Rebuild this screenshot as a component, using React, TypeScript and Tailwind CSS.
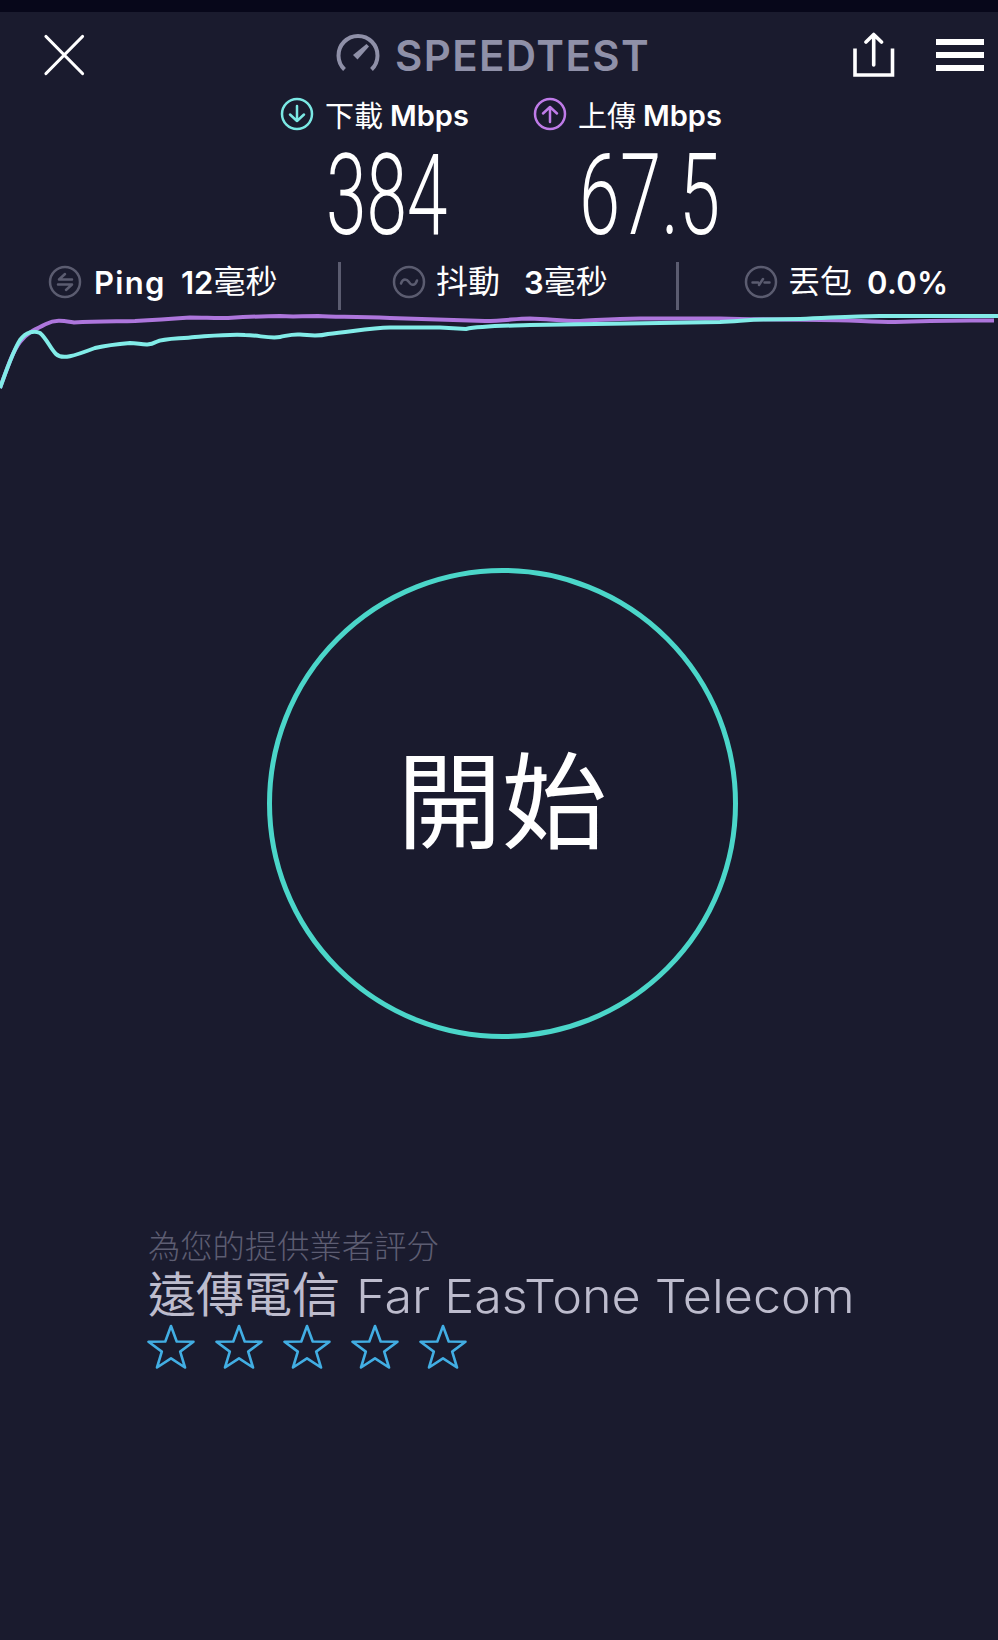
import type { ReactNode } from 'react';

const DOWNLOAD_PATH =
  'M0 88 C8 66 13 51 20 40 C26 32 34 30 40 33 C47 39 50 48 56 54 C62 60 74 56 95 48 C108 45 118 44 130 43 C140 43 147 47 156 42 C165 38 180 39 195 37 C210 36 230 34 245 35 C258 35 270 39 280 37 C290 35 292 34 300 34.500 C310 35 316 37 328 34 C350 32 370 28 390 27.500 L440 27.500 L466 29 C480 26 500 26 530 25 L660 23 L720 22 C740 21 750 19.500 765 19.500 L800 19 C830 18 850 16 880 16 L998 16';

const UPLOAD_PATH =
  'M0 88 C8 66 13 51 20 42 C28 32 36 29 46 24 C56 19 64 21 74 22.500 C95 21.500 110 21.500 135 21 C155 20 170 19 190 17.500 C205 17.500 215 18.500 228 18 C245 17 265 16 280 16 C295 17 300 16 318 16 C335 17 350 16.500 390 18 C430 19 460 20 485 21 C505 21 515 18.500 530 18.500 C550 19 560 21 580 21 C600 20 615 18.500 640 18.500 L720 18.500 C760 20 790 19 820 20 C850 20 870 22 895 22 C915 21 935 20 994 20.500';

const cjk = "font-['Noto_Sans_CJK_TC','Noto_Sans_CJK_SC',sans-serif]";

function RoundIcon({ className, children }: { className: string; children: ReactNode }) {
  return (
    <svg
      viewBox="0 0 34 34"
      className={`h-[34px] w-[34px] shrink-0 ${className}`}
      fill="none"
      stroke="currentColor"
      strokeWidth="2.5"
      strokeLinecap="round"
      strokeLinejoin="round"
    >
      <circle cx="17" cy="17" r="15" />
      {children}
    </svg>
  );
}

function Star() {
  return (
    <svg viewBox="0 0 48 46" className="h-[46px] w-12" fill="none" stroke="#42aee3" strokeWidth="2.6" strokeLinejoin="round">
      <path d="M24 2 L29.700 17.500 L46.500 17.800 L33.200 27.600 L38 43.500 L24 34.300 L10 43.500 L14.800 27.600 L1.500 17.800 L18.300 17.500 Z" />
    </svg>
  );
}

export default function App() {
  return (
    <div className="h-[1640px] w-[998px] overflow-hidden bg-[#1a1b2e] font-[Inter,'Noto_Sans_CJK_TC',sans-serif] text-white">
      <div className="h-3 bg-[#07071a]" />

      {/* Header */}
      <header className="flex h-[84px] items-center pt-0.5">
        <button className="ml-[43px] h-[42px] w-[42px]" aria-label="關閉">
          <svg viewBox="0 0 42 42" fill="none" stroke="currentColor" strokeWidth="3.2" strokeLinecap="round">
            <path d="M3 2.500 L39.500 39.500 M39.500 2.500 L3 39.500" />
          </svg>
        </button>
        <div className="ml-[250px] flex items-center text-[#8f90a8]">
          <svg viewBox="0 0 46 46" className="h-[46px] w-[46px]" fill="none" stroke="currentColor" strokeWidth="4">
            <path d="M9.500 37.500 A19.500 19.500 0 1 1 36.500 37.500" />
            <path d="M34 14.500 L22.500 27.500 L18 23 L31.500 12 Z" fill="currentColor" stroke="none" />
          </svg>
          <h1 className="ml-3.5 w-[457px] pt-0.5 text-[42px] leading-none font-semibold tracking-[1.4px] whitespace-nowrap">SPEEDTEST</h1>
        </div>
        <button className="h-[46px] w-[44px]" aria-label="分享">
          <svg viewBox="0 0 44 46" className="h-[46px] w-[44px]" fill="none" stroke="currentColor" strokeWidth="3.6">
            <path d="M3 16.500 V43 H40.500 V16.500" />
            <path d="M21.700 33 V3.500 M14 10 L21.700 2.500 L29.500 10" strokeLinecap="round" strokeLinejoin="round" />
          </svg>
        </button>
        <button className="ml-10 flex shrink-0 flex-col gap-[7px]" aria-label="選單">
          <span className="h-1.5 w-12 bg-white" />
          <span className="h-1.5 w-12 bg-white" />
          <span className="h-1.5 w-12 bg-white" />
        </button>
      </header>

      {/* Download and upload results */}
      <section className="flex h-[156px] pl-[280px]">
        <div className="w-[253px]">
          <div className="flex h-9 items-center">
            <RoundIcon className="text-[#7be8e4]">
              <path d="M17 9 V24 M10 17.500 L17 24 L24 17.500" />
            </RoundIcon>
            <span className={`ml-[11px] w-[65px] text-[29px] leading-none ${cjk}`}>下載</span>
            <span className="pt-0.5 text-[29px] leading-none font-semibold">Mbps</span>
          </div>
          <div className="mt-1 ml-[46px] origin-left scale-x-[0.64] font-[Roboto,sans-serif] text-[114px] leading-[118px] font-light whitespace-nowrap">384</div>
        </div>
        <div>
          <div className="flex h-9 items-center">
            <RoundIcon className="text-[#bf7be8]">
              <path d="M17 25 V10 M10 16.500 L17 10 L24 16.500" />
            </RoundIcon>
            <span className={`ml-[11px] w-[65px] text-[29px] leading-none ${cjk}`}>上傳</span>
            <span className="pt-0.5 text-[29px] leading-none font-semibold">Mbps</span>
          </div>
          <div className="mt-1 ml-[46px] origin-left scale-x-[0.65] font-[Roboto,sans-serif] text-[114px] leading-[118px] font-light whitespace-nowrap">67.5</div>
        </div>
      </section>

      {/* Ping, jitter, packet loss */}
      <section className="flex h-[58px] items-start pt-[10px] text-[31px] leading-none">
        <div className="flex h-10 w-[338px] items-center pl-12">
          <RoundIcon className="text-[#5b5c70]">
            <path d="M24 14.500 H11 L17 9 M10 19.500 H24 L18 25" />
          </RoundIcon>
          <span className="ml-3 w-[87px] font-semibold tracking-[1.3px]">Ping</span>
          <span className="font-semibold">12</span>
          <span className={`pb-1.5 text-[32px] ${cjk}`}>毫秒</span>
        </div>
        <div className="h-12 w-[3px] bg-[#5b5c70]" />
        <div className="flex h-10 w-[335px] items-center pl-[51px]">
          <RoundIcon className="text-[#5b5c70]">
            <path d="M9 18.500 C11 12.500 15 14 17 17 C19 20.500 23 21.500 25 15.500" />
          </RoundIcon>
          <span className={`ml-2.5 w-[88px] pb-1.5 text-[32px] ${cjk}`}>抖動</span>
          <span className="font-semibold">3</span>
          <span className={`pb-1.5 text-[32px] ${cjk}`}>毫秒</span>
        </div>
        <div className="h-12 w-[3px] bg-[#5b5c70]" />
        <div className="flex h-10 items-center pl-[65px]">
          <RoundIcon className="text-[#5b5c70]">
            <path d="M8.500 17.500 H14 M15 20 L19 14 M20.500 17.500 H25.500" />
          </RoundIcon>
          <span className={`ml-2.5 w-[79px] pb-1.5 text-[32px] ${cjk}`}>丟包</span>
          <span className="font-semibold tracking-[0.3px]">0.0%</span>
        </div>
      </section>

      <svg viewBox="0 0 998 90" className="-mt-[10px] block h-[90px] w-[998px]" fill="none" strokeWidth="4">
        <path d={UPLOAD_PATH} stroke="#ad76dc" />
        <path d={DOWNLOAD_PATH} stroke="#82ece8" />
      </svg>

      <main className="flex justify-center pt-[178px] pl-[6px]">
        <button className="flex h-[471px] w-[471px] items-center justify-center rounded-full border-[5.5px] border-[#4bd6c9]">
          <span className={`pb-[18px] text-[105px] leading-none ${cjk}`}>開始</span>
        </button>
      </main>

      {/* Provider rating */}
      <footer className="pt-[187px] pl-[148px]">
        <p className={`text-[32.3px] leading-9 font-light text-[#5d5d72] ${cjk}`}>為您的提供業者評分</p>
        <div className="mt-1 flex h-[58px] items-center whitespace-nowrap text-[#bdbccd]">
          <span className={`w-[208px] pb-2 text-[48px] leading-none ${cjk}`}>遠傳電信</span>
          <span className="origin-left scale-x-[1.07] text-[47px] leading-none font-light">Far EasTone Telecom</span>
        </div>
        <div className="-ml-px flex gap-5">
          {[1, 2, 3, 4, 5].map((n) => (
            <Star key={n} />
          ))}
        </div>
      </footer>
    </div>
  );
}
